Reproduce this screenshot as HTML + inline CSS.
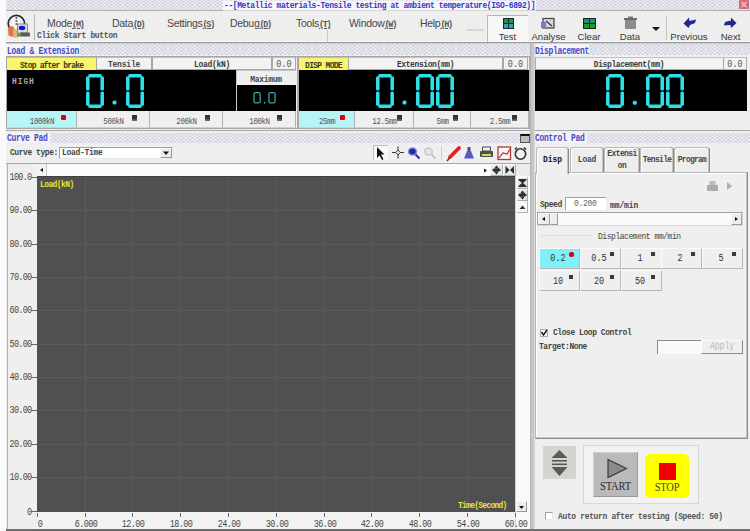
<!DOCTYPE html><html><head><meta charset="utf-8"><style>
*{margin:0;padding:0;box-sizing:border-box}
html,body{width:750px;height:531px;overflow:hidden;background:#efefef;position:relative}
div{position:absolute}
svg{position:absolute;left:0;top:0}
.t{white-space:nowrap;font-family:"Liberation Mono",monospace;font-size:8px;line-height:10px;color:#444;transform:scaleY(1.2);transform-origin:50% 55%}
.b{font-weight:bold}
.sa{font-family:"Liberation Sans",sans-serif;transform:none}
.ns{transform:none}
.hd{color:#4a4ac4;font-weight:bold;font-size:8px;line-height:10px;letter-spacing:-0.3px;padding-top:1px;height:11px;transform:scaleY(1.25)}
.pb{background:#f2f2f2;border:1px solid #a8a8a8;border-top-color:#c0c0c0}
.btn{background:#ececec;border-left:1px solid #fafafa;border-top:1px solid #fafafa;border-right:1px solid #9a9a9a;border-bottom:1px solid #9a9a9a}
</style></head><body>
<div style="left:0px;top:0px;width:6px;height:531px;background:#fafafa"></div>
<div style="left:6px;top:0px;width:744px;height:10px;background-color:#f6f6fa;background-image:radial-gradient(circle at center,#cacad8 0.8px,transparent 1.4px),radial-gradient(circle at center,#cacad8 0.8px,transparent 1.4px);background-size:4.5px 3.4px;background-position:0 0,2.25px 1.7px;"></div>
<div style="left:6px;top:10px;width:744px;height:1px;background:#b0b0b0"></div>
<div class="t b" style="left:223px;top:1px;color:#3535cc;font-size:8px;line-height:9px;letter-spacing:-0.42px;background:#f6f6fb;padding:0 1px;height:9px;transform:scaleY(1.1);transform-origin:50% 40%">--[Metallic materials-Tensile testing at ambient temperature(ISO-6892)]</div>
<div style="left:739px;top:0px;width:10px;height:9px;background:#d96a7a;border-radius:1px"></div>
<svg width="750" height="12"><path d="M741.5 2 L746.5 7 M746.5 2 L741.5 7" stroke="#f6c8cc" stroke-width="1.3"/></svg>
<div style="left:6px;top:11px;width:744px;height:31px;background:#eeeeee"></div>
<div style="left:6px;top:41px;width:744px;height:1px;background:#f8f8f8"></div>
<div style="left:6px;top:42px;width:744px;height:1px;background:#9a9a9a"></div>
<div style="left:6px;top:43px;width:744px;height:1px;background:#d0d0d0"></div>
<svg width="750" height="60">
<circle cx="16.4" cy="23.6" r="8.2" fill="#f2f2f2" stroke="#2a2a2a" stroke-width="1.7"/>
<rect x="15.6" y="17" width="1.6" height="2" fill="#666"/><rect x="15.6" y="20" width="1.6" height="2" fill="#666"/><rect x="15.6" y="23" width="1.6" height="2" fill="#666"/>
<path d="M8 27.5 Q11 25.5 14 27 L14.5 36 Q11 37.5 8.5 35.5 Z" fill="#e2703c"/>
<path d="M12.5 29.5 L16.5 29 L18 37.5 L13.5 37.5 Z" fill="#dcb47c"/>
<rect x="17.5" y="24" width="10" height="9" fill="#dcdcdc" stroke="#8a8a8a" stroke-width="1"/>
<ellipse cx="22" cy="28" rx="3.3" ry="2.2" fill="#1414d8"/>
<rect x="20" y="32.5" width="10" height="4" fill="#5a5a5a" rx="1"/>
<rect x="17" y="33.5" width="4" height="3" fill="#4aa04a"/>
</svg>
<div style="left:34px;top:14px;width:1px;height:26px;background:#b4b4b4"></div>
<div class="t sa" style="left:47px;top:18px;font-size:10.5px;line-height:11px;color:#484848;letter-spacing:-0.3px">Mode<span style="font-family:Liberation Mono;font-size:8.5px;text-decoration:underline;letter-spacing:-1.3px;font-weight:bold;color:#555">(M)</span></div>
<div class="t sa" style="left:112px;top:18px;font-size:10.5px;line-height:11px;color:#484848;letter-spacing:-0.3px">Data<span style="font-family:Liberation Mono;font-size:8.5px;text-decoration:underline;letter-spacing:-1.3px;font-weight:bold;color:#555">(D)</span></div>
<div class="t sa" style="left:167px;top:18px;font-size:10.5px;line-height:11px;color:#484848;letter-spacing:-0.3px">Settings<span style="font-family:Liberation Mono;font-size:8.5px;text-decoration:underline;letter-spacing:-1.3px;font-weight:bold;color:#555">(S)</span></div>
<div class="t sa" style="left:230px;top:18px;font-size:10.5px;line-height:11px;color:#484848;letter-spacing:-0.3px">Debug<span style="font-family:Liberation Mono;font-size:8.5px;text-decoration:underline;letter-spacing:-1.3px;font-weight:bold;color:#555">(D)</span></div>
<div class="t sa" style="left:296px;top:18px;font-size:10.5px;line-height:11px;color:#484848;letter-spacing:-0.3px">Tools<span style="font-family:Liberation Mono;font-size:8.5px;text-decoration:underline;letter-spacing:-1.3px;font-weight:bold;color:#555">(T)</span></div>
<div class="t sa" style="left:349px;top:18px;font-size:10.5px;line-height:11px;color:#484848;letter-spacing:-0.3px">Window<span style="font-family:Liberation Mono;font-size:8.5px;text-decoration:underline;letter-spacing:-1.3px;font-weight:bold;color:#555">(W)</span></div>
<div class="t sa" style="left:420px;top:18px;font-size:10.5px;line-height:11px;color:#484848;letter-spacing:-0.3px">Help<span style="font-family:Liberation Mono;font-size:8.5px;text-decoration:underline;letter-spacing:-1.3px;font-weight:bold;color:#555">(H)</span></div>
<div class="t b" style="left:37px;top:31px;font-size:8px;letter-spacing:-0.35px;color:#555">Click Start button</div>
<div style="left:327px;top:30px;width:1px;height:12px;background:#c8c8c8"></div>
<div style="left:467px;top:29px;width:17px;height:2px;background:#d6d6d6"></div>
<div style="left:487px;top:15px;width:41px;height:27px;background:#f7f7f7;border-left:1px solid #b8b8b8;border-top:1px solid #b8b8b8"></div>
<svg width="750" height="45">
<rect x="503" y="18" width="11" height="11" fill="#102840"/>
<rect x="504" y="19" width="4" height="4" fill="#1a9a3a"/><rect x="509" y="19" width="4" height="4" fill="#1a9a3a"/>
<rect x="504" y="24" width="4" height="4" fill="#3aa0a8"/><rect x="509" y="24" width="4" height="4" fill="#3aa0a8"/>
<rect x="543" y="18.5" width="11" height="9.5" fill="#d6d6d6" stroke="#4a4a4a" stroke-width="1.3"/>
<rect x="541" y="22" width="5" height="6" fill="#7878d0"/>
<path d="M546 21 L552 26" stroke="#333" stroke-width="1.2"/>
<rect x="583" y="18" width="13" height="11" fill="#0b2a1a"/>
<rect x="584" y="19" width="5" height="4" fill="#2a8a7a"/><rect x="590" y="19" width="5" height="4" fill="#2a8a7a"/>
<rect x="584" y="24" width="5" height="4" fill="#1aa02a"/><rect x="590" y="24" width="5" height="4" fill="#1aa02a"/>
<rect x="625" y="19.5" width="11" height="9.5" fill="#8c8c8c" rx="1"/>
<rect x="624" y="18" width="13" height="2" fill="#6a6a6a"/>
<rect x="628" y="16.5" width="5" height="2" fill="#777"/>
<path d="M652 27 L660 27 L656 31 Z" fill="#111"/>
<path d="M683.5 23.5 L689 17.5 L689.5 21 L696 19.5 L695 23 L690 25 L688.5 28 Z" fill="#26268c"/>
<path d="M736.5 23 L731 17.5 L731 20.5 L725 22 L724 25.5 L730.5 25 L731 28 Z" fill="#26268c"/>
</svg>
<div style="left:666px;top:16px;width:1px;height:24px;background:#c4c4c4"></div>
<div class="t sa" style="left:487px;top:31px;width:41px;text-align:center;font-size:9.6px;line-height:11px;color:#383838">Test</div>
<div class="t sa" style="left:528px;top:31px;width:41px;text-align:center;font-size:9.6px;line-height:11px;color:#383838">Analyse</div>
<div class="t sa" style="left:574px;top:31px;width:30px;text-align:center;font-size:9.6px;line-height:11px;color:#383838">Clear</div>
<div class="t sa" style="left:616px;top:31px;width:28px;text-align:center;font-size:9.6px;line-height:11px;color:#383838">Data</div>
<div class="t sa" style="left:668px;top:31px;width:42px;text-align:center;font-size:9.6px;line-height:11px;color:#383838">Previous</div>
<div class="t sa" style="left:716px;top:31px;width:29px;text-align:center;font-size:9.6px;line-height:11px;color:#383838">Next</div>
<div style="left:6px;top:44px;width:524px;height:11px;background-color:#f6f6fa;background-image:radial-gradient(circle at center,#cacad8 0.8px,transparent 1.4px),radial-gradient(circle at center,#cacad8 0.8px,transparent 1.4px);background-size:4.5px 3.4px;background-position:0 0,2.25px 1.7px;"></div>
<div style="left:6px;top:44px;width:74px;height:11px;background:#f3f3f8"></div>
<div class="t hd" style="left:7px;top:46px;">Load &amp; Extension</div>
<div style="left:535px;top:44px;width:215px;height:11px;background-color:#f6f6fa;background-image:radial-gradient(circle at center,#cacad8 0.8px,transparent 1.4px),radial-gradient(circle at center,#cacad8 0.8px,transparent 1.4px);background-size:4.5px 3.4px;background-position:0 0,2.25px 1.7px;"></div>
<div style="left:535px;top:44px;width:54px;height:11px;background:#f3f3f8"></div>
<div class="t hd" style="left:535px;top:46px;">Displacement</div>
<div style="left:530px;top:43px;width:5px;height:486px;background:#c6c6c6;border-left:1px solid #b4b4b4;border-right:1px solid #dadada"></div>
<div style="left:6px;top:56px;width:292px;height:73px;background:#efefef;border:1px solid #a8a8a8"></div>
<div style="left:7px;top:57px;width:89px;height:13px;background:#f9f56e;border-top:1px solid #c8c470"></div>
<div class="t b" style="left:7px;top:61px;width:89px;text-align:center;letter-spacing:-0.85px;color:#3a3a20">Stop after brake</div>
<div class="pb" style="left:96px;top:57px;width:56px;height:13px;"></div>
<div class="pb" style="left:152px;top:57px;width:120px;height:13px;"></div>
<div class="pb" style="left:272px;top:57px;width:24px;height:13px;"></div>
<div class="t b" style="left:96px;top:60px;width:56px;text-align:center;color:#484848;letter-spacing:-0.2px">Tensile</div>
<div class="t b" style="left:152px;top:60px;width:120px;text-align:center;letter-spacing:-0.3px;color:#3a3a3a">Load(kN)</div>
<div class="t " style="left:272px;top:60px;width:24px;text-align:center;font-size:8.5px;color:#555">0.0</div>
<div style="left:7px;top:70px;width:229px;height:41px;background:#000"></div>
<div style="left:236px;top:70px;width:60px;height:15px;background:#efefef;border-top:1px solid #c4c4c4;border-left:1px solid #c4c4c4"></div>
<div class="t b" style="left:236px;top:75px;width:60px;text-align:center;color:#454545;letter-spacing:-0.3px">Maximum</div>
<div style="left:236px;top:85px;width:60px;height:26px;background:#000;border-left:1px solid #c8c8c8"></div>
<div class="t b" style="left:12px;top:77px;color:#a8a8a8;letter-spacing:0.9px">HIGH</div>
<div style="left:7px;top:111px;width:70px;height:17px;background:#b8f4f6;border-right:1px solid #b0b0b0;border-bottom:1px solid #d0d0d0"></div>
<div class="t " style="left:7px;top:117px;width:70px;text-align:center;font-size:7.5px;color:#555;letter-spacing:-0.45px">1000kN</div>
<div style="left:77px;top:111px;width:73px;height:17px;background:#efefef;border-right:1px solid #b0b0b0;border-bottom:1px solid #d0d0d0"></div>
<div class="t " style="left:77px;top:117px;width:73px;text-align:center;font-size:7.5px;color:#555;letter-spacing:-0.45px">500kN</div>
<div style="left:150px;top:111px;width:73px;height:17px;background:#efefef;border-right:1px solid #b0b0b0;border-bottom:1px solid #d0d0d0"></div>
<div class="t " style="left:150px;top:117px;width:73px;text-align:center;font-size:7.5px;color:#555;letter-spacing:-0.45px">200kN</div>
<div style="left:223px;top:111px;width:73px;height:17px;background:#efefef;border-right:1px solid #b0b0b0;border-bottom:1px solid #d0d0d0"></div>
<div class="t " style="left:223px;top:117px;width:73px;text-align:center;font-size:7.5px;color:#555;letter-spacing:-0.45px">100kN</div>
<div style="left:298px;top:56px;width:232px;height:73px;background:#efefef;border:1px solid #a8a8a8"></div>
<div style="left:299px;top:57px;width:49px;height:13px;background:#f9f56e;border-top:1px solid #c8c470"></div>
<div class="t b" style="left:299px;top:61px;width:49px;text-align:center;letter-spacing:-0.7px;color:#3a3a20">DISP MODE</div>
<div class="pb" style="left:348px;top:57px;width:155px;height:13px;"></div>
<div class="pb" style="left:503px;top:57px;width:25px;height:13px;"></div>
<div class="t b" style="left:348px;top:60px;width:155px;text-align:center;letter-spacing:-0.4px;color:#3a3a3a">Extension(mm)</div>
<div class="t " style="left:503px;top:60px;width:25px;text-align:center;font-size:8.5px;color:#555">0.0</div>
<div style="left:299px;top:70px;width:230px;height:41px;background:#000"></div>
<div style="left:299px;top:111px;width:56px;height:17px;background:#b8f4f6;border-right:1px solid #b0b0b0;border-bottom:1px solid #d0d0d0"></div>
<div class="t " style="left:299px;top:117px;width:56px;text-align:center;font-size:7.5px;color:#555;letter-spacing:-0.45px">25mm</div>
<div style="left:355px;top:111px;width:59px;height:17px;background:#efefef;border-right:1px solid #b0b0b0;border-bottom:1px solid #d0d0d0"></div>
<div class="t " style="left:355px;top:117px;width:59px;text-align:center;font-size:7.5px;color:#555;letter-spacing:-0.45px">12.5mm</div>
<div style="left:414px;top:111px;width:57px;height:17px;background:#efefef;border-right:1px solid #b0b0b0;border-bottom:1px solid #d0d0d0"></div>
<div class="t " style="left:414px;top:117px;width:57px;text-align:center;font-size:7.5px;color:#555;letter-spacing:-0.45px">5mm</div>
<div style="left:471px;top:111px;width:58px;height:17px;background:#efefef;border-right:1px solid #b0b0b0;border-bottom:1px solid #d0d0d0"></div>
<div class="t " style="left:471px;top:117px;width:58px;text-align:center;font-size:7.5px;color:#555;letter-spacing:-0.45px">2.5mm</div>
<div class="pb" style="left:535px;top:57px;width:212px;height:13px;"></div>
<div class="pb" style="left:723px;top:57px;width:24px;height:13px;"></div>
<div class="t b" style="left:535px;top:60px;width:188px;text-align:center;letter-spacing:-0.4px;color:#3a3a3a">Displacement(mm)</div>
<div class="t " style="left:723px;top:60px;width:24px;text-align:center;font-size:8.5px;color:#555">0.0</div>
<div style="left:535px;top:70px;width:212px;height:41px;background:#000"></div>
<div style="left:61px;top:115px;width:5px;height:5px;background:#e00000;border-radius:1px"></div>
<div style="left:132px;top:115px;width:5px;height:6px;background:linear-gradient(to bottom,#2e2e2e 0,#3a3a3a 60%,#7a7a7a 100%)"></div>
<div style="left:205px;top:115px;width:5px;height:6px;background:linear-gradient(to bottom,#2e2e2e 0,#3a3a3a 60%,#7a7a7a 100%)"></div>
<div style="left:277px;top:115px;width:5px;height:6px;background:linear-gradient(to bottom,#2e2e2e 0,#3a3a3a 60%,#7a7a7a 100%)"></div>
<div style="left:340px;top:115px;width:5px;height:5px;background:#e00000;border-radius:1px"></div>
<div style="left:397px;top:115px;width:5px;height:6px;background:linear-gradient(to bottom,#2e2e2e 0,#3a3a3a 60%,#7a7a7a 100%)"></div>
<div style="left:453px;top:115px;width:5px;height:6px;background:linear-gradient(to bottom,#2e2e2e 0,#3a3a3a 60%,#7a7a7a 100%)"></div>
<div style="left:512px;top:115px;width:5px;height:6px;background:linear-gradient(to bottom,#2e2e2e 0,#3a3a3a 60%,#7a7a7a 100%)"></div>
<svg width="750" height="531"><g fill="#2fdfe8"><rect x="88.2" y="74" width="13.6" height="3.6" rx="1.6"/><rect x="88.2" y="104.4" width="13.6" height="3.6" rx="1.6"/><rect x="86" y="76.2" width="3.6" height="14.399999999999999" rx="1.6"/><rect x="86" y="91.4" width="3.6" height="14.399999999999999" rx="1.6"/><rect x="100.4" y="76.2" width="3.6" height="14.399999999999999" rx="1.6"/><rect x="100.4" y="91.4" width="3.6" height="14.399999999999999" rx="1.6"/><rect x="128.2" y="74" width="13.6" height="3.6" rx="1.6"/><rect x="128.2" y="104.4" width="13.6" height="3.6" rx="1.6"/><rect x="126" y="76.2" width="3.6" height="14.399999999999999" rx="1.6"/><rect x="126" y="91.4" width="3.6" height="14.399999999999999" rx="1.6"/><rect x="140.4" y="76.2" width="3.6" height="14.399999999999999" rx="1.6"/><rect x="140.4" y="91.4" width="3.6" height="14.399999999999999" rx="1.6"/><rect x="112.5" y="100.5" width="4" height="4" rx="1.5"/><rect x="378.2" y="74" width="13.6" height="3.6" rx="1.6"/><rect x="378.2" y="104.4" width="13.6" height="3.6" rx="1.6"/><rect x="376" y="76.2" width="3.6" height="14.399999999999999" rx="1.6"/><rect x="376" y="91.4" width="3.6" height="14.399999999999999" rx="1.6"/><rect x="390.4" y="76.2" width="3.6" height="14.399999999999999" rx="1.6"/><rect x="390.4" y="91.4" width="3.6" height="14.399999999999999" rx="1.6"/><rect x="418.2" y="74" width="13.6" height="3.6" rx="1.6"/><rect x="418.2" y="104.4" width="13.6" height="3.6" rx="1.6"/><rect x="416" y="76.2" width="3.6" height="14.399999999999999" rx="1.6"/><rect x="416" y="91.4" width="3.6" height="14.399999999999999" rx="1.6"/><rect x="430.4" y="76.2" width="3.6" height="14.399999999999999" rx="1.6"/><rect x="430.4" y="91.4" width="3.6" height="14.399999999999999" rx="1.6"/><rect x="438.2" y="74" width="13.6" height="3.6" rx="1.6"/><rect x="438.2" y="104.4" width="13.6" height="3.6" rx="1.6"/><rect x="436" y="76.2" width="3.6" height="14.399999999999999" rx="1.6"/><rect x="436" y="91.4" width="3.6" height="14.399999999999999" rx="1.6"/><rect x="450.4" y="76.2" width="3.6" height="14.399999999999999" rx="1.6"/><rect x="450.4" y="91.4" width="3.6" height="14.399999999999999" rx="1.6"/><rect x="402.5" y="100.5" width="4" height="4" rx="1.5"/><rect x="608.1999999999999" y="74" width="13.6" height="3.6" rx="1.6"/><rect x="608.1999999999999" y="104.4" width="13.6" height="3.6" rx="1.6"/><rect x="606" y="76.2" width="3.6" height="14.399999999999999" rx="1.6"/><rect x="606" y="91.4" width="3.6" height="14.399999999999999" rx="1.6"/><rect x="620.4" y="76.2" width="3.6" height="14.399999999999999" rx="1.6"/><rect x="620.4" y="91.4" width="3.6" height="14.399999999999999" rx="1.6"/><rect x="648.1999999999999" y="74" width="13.6" height="3.6" rx="1.6"/><rect x="648.1999999999999" y="104.4" width="13.6" height="3.6" rx="1.6"/><rect x="646" y="76.2" width="3.6" height="14.399999999999999" rx="1.6"/><rect x="646" y="91.4" width="3.6" height="14.399999999999999" rx="1.6"/><rect x="660.4" y="76.2" width="3.6" height="14.399999999999999" rx="1.6"/><rect x="660.4" y="91.4" width="3.6" height="14.399999999999999" rx="1.6"/><rect x="668.1999999999999" y="74" width="13.6" height="3.6" rx="1.6"/><rect x="668.1999999999999" y="104.4" width="13.6" height="3.6" rx="1.6"/><rect x="666" y="76.2" width="3.6" height="14.399999999999999" rx="1.6"/><rect x="666" y="91.4" width="3.6" height="14.399999999999999" rx="1.6"/><rect x="680.4" y="76.2" width="3.6" height="14.399999999999999" rx="1.6"/><rect x="680.4" y="91.4" width="3.6" height="14.399999999999999" rx="1.6"/><rect x="632.8" y="100.8" width="4" height="4" rx="1.5"/></g><g fill="none" stroke="#38a8a0" stroke-width="1.3"><rect x="254" y="92.6" width="6.2" height="10.2" rx="1.4"/><rect x="268.9" y="92.6" width="6.2" height="10.2" rx="1.4"/></g><rect x="264" y="102" width="1.6" height="1.6" fill="#2aa8a8"/></svg>
<div style="left:6px;top:130px;width:524px;height:1px;background:#a8a8a8"></div>
<div style="left:6px;top:133px;width:524px;height:10px;background-color:#f6f6fa;background-image:radial-gradient(circle at center,#cacad8 0.8px,transparent 1.4px),radial-gradient(circle at center,#cacad8 0.8px,transparent 1.4px);background-size:4.5px 3.4px;background-position:0 0,2.25px 1.7px;"></div>
<div style="left:6px;top:133px;width:44px;height:10px;background:#f3f3f8"></div>
<div class="t hd" style="left:7px;top:133px;">Curve Pad</div>
<div style="left:520px;top:134px;width:10px;height:9px;background:#bdbdbd;border:1px solid #555;border-top:2px solid #111"></div>
<div class="t b" style="left:10px;top:148px;color:#454545;letter-spacing:-0.45px">Curve type:</div>
<div style="left:59px;top:147px;width:114px;height:12px;background:#fff;border:1px solid #a0a0a0;border-right-color:#e8e8e8;border-bottom-color:#e8e8e8"></div>
<div class="t b" style="left:62px;top:148px;color:#454545;letter-spacing:-0.3px">Load-Time</div>
<div class="btn" style="left:160px;top:148px;width:12px;height:10px;"></div>
<svg width="750" height="531"><path d="M163 151.5 L169 151.5 L166 155 Z" fill="#111"/>
<rect x="373" y="145" width="15" height="15" fill="#f8f8f8"/><path d="M373.5 160 V145.5 H388" stroke="#bcbcbc" fill="none"/>
<path d="M377 147 L377 158 L379.5 155.5 L382 160 L383.5 159.2 L381 154.5 L384.5 154.5 Z" fill="#111"/>
<path d="M398 146.5 V158.5 M392 152.5 H404" stroke="#3a3a3a" stroke-width="1.1"/>
<path d="M398 150 L400.5 152.5 L398 155 L395.5 152.5 Z" fill="#ddd" stroke="#333" stroke-width="0.9"/>
<ellipse cx="412.5" cy="151.5" rx="4" ry="3.6" fill="#2828a8" stroke="#8c8cd8" stroke-width="1.4"/>
<path d="M415.5 154.5 L419.5 158.5" stroke="#2a2a98" stroke-width="2"/>
<ellipse cx="428.5" cy="151.5" rx="3.8" ry="3.5" fill="#e4e4e4" stroke="#c4c4c4" stroke-width="1.3"/>
<path d="M431.5 154.5 L435.5 158.5" stroke="#c4c4c4" stroke-width="1.8"/>
<path d="M441.5 146 V160" stroke="#cfcfcf"/>
<path d="M450 157 L459 148" stroke="#e42020" stroke-width="3.8" stroke-linecap="round"/>
<path d="M447 161 L449.5 158" stroke="#444" stroke-width="1.6"/>
<rect x="467.5" y="147" width="3" height="4.5" fill="#505070"/><path d="M467 151 L471 151 L474 158.5 L464 158.5 Z" fill="#5a5ac0"/>
<rect x="480" y="151" width="13" height="6" fill="#505050" rx="1"/>
<rect x="482.5" y="147" width="8" height="4" fill="#eee" stroke="#505050"/>
<rect x="482" y="154" width="9" height="2" fill="#d8d850"/>
<rect x="498" y="147" width="12.5" height="12.5" fill="#f8f8f8" stroke="#b03838" stroke-width="1.3"/>
<path d="M499 158 L503 153 L507 154 L510 149" stroke="#d82020" fill="none" stroke-width="1.2"/>
<circle cx="520.5" cy="154" r="5.2" fill="#f4f4f4" stroke="#333" stroke-width="1.6"/>
<path d="M515 149.5 L517 147.5 M526 149.5 L524 147.5" stroke="#333" stroke-width="1.6"/>
</svg>
<div style="left:6px;top:163px;width:524px;height:1px;background:#a8a8a8"></div>
<div style="left:7px;top:164px;width:523px;height:365px;background:#efefef;border-left:1px solid #b0b0b0"></div>
<div style="left:47px;top:164px;width:437px;height:13px;background:#fbfbfb"></div>
<div style="left:37px;top:164px;width:10px;height:13px;background:#f2f2f2;border-right:1px solid #c8c8c8"></div>
<div style="left:482px;top:164px;width:8px;height:12px;background:#fbfbfb"></div>
<div style="left:490px;top:164px;width:13px;height:12px;background:#e8e8e8;border-left:1px solid #fafafa;border-top:1px solid #fafafa;border-right:1px solid #b0b0b0;border-bottom:1px solid #b0b0b0"></div>
<div style="left:503px;top:164px;width:13px;height:12px;background:#e8e8e8;border-left:1px solid #fafafa;border-top:1px solid #fafafa;border-right:1px solid #b0b0b0;border-bottom:1px solid #b0b0b0"></div>
<div style="left:516px;top:164px;width:14px;height:13px;background:#ececec"></div>
<div style="left:37px;top:176px;width:478px;height:336px;background:#505050;border-top:1px solid #404040"></div>
<svg width="750" height="531"><g fill="#5b5b5b"><rect x="85" y="177" width="1" height="335"/><rect x="132" y="177" width="1" height="335"/><rect x="180" y="177" width="1" height="335"/><rect x="228" y="177" width="1" height="335"/><rect x="276" y="177" width="1" height="335"/><rect x="324" y="177" width="1" height="335"/><rect x="371" y="177" width="1" height="335"/><rect x="419" y="177" width="1" height="335"/><rect x="467" y="177" width="1" height="335"/><rect x="37" y="210" width="478" height="1"/><rect x="37" y="244" width="478" height="1"/><rect x="37" y="277" width="478" height="1"/><rect x="37" y="310" width="478" height="1"/><rect x="37" y="344" width="478" height="1"/><rect x="37" y="377" width="478" height="1"/><rect x="37" y="410" width="478" height="1"/><rect x="37" y="444" width="478" height="1"/><rect x="37" y="477" width="478" height="1"/></g></svg>
<div class="t b" style="left:40px;top:180px;color:#e4e43a;letter-spacing:-0.6px">Load(kN)</div>
<div class="t b" style="left:458px;top:501px;color:#e4e43a;letter-spacing:-0.75px">Time(Second)</div>
<div style="left:37px;top:512px;width:478px;height:17px;background:#f3f3f3"></div>
<div style="left:515px;top:176px;width:15px;height:353px;background:#fafafa;border-left:1px solid #d0d0d0"></div>
<div style="left:517px;top:177px;width:11px;height:12px;background:#e6e6e6;border-left:1px solid #fafafa;border-top:1px solid #fafafa;border-right:1px solid #a8a8a8;border-bottom:1px solid #a8a8a8"></div>
<div style="left:517px;top:189px;width:11px;height:12px;background:#e6e6e6;border-left:1px solid #fafafa;border-top:1px solid #fafafa;border-right:1px solid #a8a8a8;border-bottom:1px solid #a8a8a8"></div>
<div style="left:517px;top:201px;width:11px;height:12px;background:#f6f6f6;border-right:1px solid #b4b4b4;border-bottom:1px solid #b4b4b4"></div>
<div class="btn" style="left:516px;top:501px;width:11px;height:11px;"></div>
<svg width="750" height="531">
<path d="M519 506 L524 506 L521.5 509 Z" fill="#111"/>
<path d="M519.5 209 L525.5 209 L522.5 205.5 Z" fill="#333"/>
<path d="M518.5 179 H526.5 V180 L523 183 L526.5 186 V187 H518.5 V186 L522 183 L518.5 180 Z" fill="#2e2e2e"/>
<path d="M520.0 193.5 L522.5 190.5 L525.0 193.5 Z M520.0 196.5 L522.5 199.5 L525.0 196.5 Z M521.0 192.5 L518.0 195 L521.0 197.5 Z M524.0 192.5 L527.0 195 L524.0 197.5 Z" fill="#2e2e2e"/><rect x="520.9" y="193.4" width="3.2" height="3.2" fill="#2e2e2e"/>
<path d="M494.0 168.5 L496.5 165.5 L499.0 168.5 Z M494.0 171.5 L496.5 174.5 L499.0 171.5 Z M495.0 167.5 L492.0 170 L495.0 172.5 Z M498.0 167.5 L501.0 170 L498.0 172.5 Z" fill="#2e2e2e"/><rect x="494.9" y="168.4" width="3.2" height="3.2" fill="#2e2e2e"/>
<path d="M484 168.5 L484 172.5 L487 170.5 Z" fill="#111"/>
<path d="M43 168 L43 172 L40 170 Z" fill="#111"/>
<path d="M505.5 166 V174 L509.5 170 Z M514 166 V174 L510 170 Z" fill="#2e2e2e"/>
</svg>
<div class="t " style="left:0px;top:173px;width:31.5px;text-align:right;font-size:8.5px;color:#484848;letter-spacing:-0.7px">100.0</div>
<div style="left:31px;top:177px;width:6px;height:1px;background:#666"></div>
<div class="t " style="left:0px;top:206px;width:31.5px;text-align:right;font-size:8.5px;color:#484848;letter-spacing:-0.7px">90.00</div>
<div style="left:31px;top:210px;width:6px;height:1px;background:#666"></div>
<div class="t " style="left:0px;top:240px;width:31.5px;text-align:right;font-size:8.5px;color:#484848;letter-spacing:-0.7px">80.00</div>
<div style="left:31px;top:244px;width:6px;height:1px;background:#666"></div>
<div class="t " style="left:0px;top:273px;width:31.5px;text-align:right;font-size:8.5px;color:#484848;letter-spacing:-0.7px">70.00</div>
<div style="left:31px;top:277px;width:6px;height:1px;background:#666"></div>
<div class="t " style="left:0px;top:306px;width:31.5px;text-align:right;font-size:8.5px;color:#484848;letter-spacing:-0.7px">60.00</div>
<div style="left:31px;top:310px;width:6px;height:1px;background:#666"></div>
<div class="t " style="left:0px;top:340px;width:31.5px;text-align:right;font-size:8.5px;color:#484848;letter-spacing:-0.7px">50.00</div>
<div style="left:31px;top:344px;width:6px;height:1px;background:#666"></div>
<div class="t " style="left:0px;top:373px;width:31.5px;text-align:right;font-size:8.5px;color:#484848;letter-spacing:-0.7px">40.00</div>
<div style="left:31px;top:377px;width:6px;height:1px;background:#666"></div>
<div class="t " style="left:0px;top:406px;width:31.5px;text-align:right;font-size:8.5px;color:#484848;letter-spacing:-0.7px">30.00</div>
<div style="left:31px;top:410px;width:6px;height:1px;background:#666"></div>
<div class="t " style="left:0px;top:440px;width:31.5px;text-align:right;font-size:8.5px;color:#484848;letter-spacing:-0.7px">20.00</div>
<div style="left:31px;top:444px;width:6px;height:1px;background:#666"></div>
<div class="t " style="left:0px;top:473px;width:31.5px;text-align:right;font-size:8.5px;color:#484848;letter-spacing:-0.7px">10.00</div>
<div style="left:31px;top:477px;width:6px;height:1px;background:#666"></div>
<div class="t " style="left:0px;top:508px;width:31.5px;text-align:right;font-size:8.5px;color:#484848;letter-spacing:-0.7px">0</div>
<div style="left:31px;top:511px;width:6px;height:1px;background:#666"></div>
<div style="left:37px;top:513px;width:1px;height:4px;background:#666"></div>
<div class="t " style="left:20px;top:520px;width:40px;text-align:center;font-size:8.5px;color:#484848;letter-spacing:-0.6px">0</div>
<div style="left:85px;top:513px;width:1px;height:4px;background:#666"></div>
<div class="t " style="left:66px;top:520px;width:40px;text-align:center;font-size:8.5px;color:#484848;letter-spacing:-0.6px">6.000</div>
<div style="left:132px;top:513px;width:1px;height:4px;background:#666"></div>
<div class="t " style="left:113px;top:520px;width:40px;text-align:center;font-size:8.5px;color:#484848;letter-spacing:-0.6px">12.00</div>
<div style="left:180px;top:513px;width:1px;height:4px;background:#666"></div>
<div class="t " style="left:161px;top:520px;width:40px;text-align:center;font-size:8.5px;color:#484848;letter-spacing:-0.6px">18.00</div>
<div style="left:228px;top:513px;width:1px;height:4px;background:#666"></div>
<div class="t " style="left:209px;top:520px;width:40px;text-align:center;font-size:8.5px;color:#484848;letter-spacing:-0.6px">24.00</div>
<div style="left:276px;top:513px;width:1px;height:4px;background:#666"></div>
<div class="t " style="left:257px;top:520px;width:40px;text-align:center;font-size:8.5px;color:#484848;letter-spacing:-0.6px">30.00</div>
<div style="left:324px;top:513px;width:1px;height:4px;background:#666"></div>
<div class="t " style="left:305px;top:520px;width:40px;text-align:center;font-size:8.5px;color:#484848;letter-spacing:-0.6px">36.00</div>
<div style="left:371px;top:513px;width:1px;height:4px;background:#666"></div>
<div class="t " style="left:352px;top:520px;width:40px;text-align:center;font-size:8.5px;color:#484848;letter-spacing:-0.6px">42.00</div>
<div style="left:419px;top:513px;width:1px;height:4px;background:#666"></div>
<div class="t " style="left:400px;top:520px;width:40px;text-align:center;font-size:8.5px;color:#484848;letter-spacing:-0.6px">48.00</div>
<div style="left:467px;top:513px;width:1px;height:4px;background:#666"></div>
<div class="t " style="left:448px;top:520px;width:40px;text-align:center;font-size:8.5px;color:#484848;letter-spacing:-0.6px">54.00</div>
<div style="left:515px;top:513px;width:1px;height:4px;background:#666"></div>
<div class="t " style="left:496px;top:520px;width:40px;text-align:center;font-size:8.5px;color:#484848;letter-spacing:-0.6px">60.00</div>
<div style="left:6px;top:529px;width:744px;height:2px;background:#6e6e6e"></div>
<div style="left:535px;top:130px;width:215px;height:1px;background:#a8a8a8"></div>
<div style="left:535px;top:133px;width:215px;height:10px;background-color:#f6f6fa;background-image:radial-gradient(circle at center,#cacad8 0.8px,transparent 1.4px),radial-gradient(circle at center,#cacad8 0.8px,transparent 1.4px);background-size:4.5px 3.4px;background-position:0 0,2.25px 1.7px;"></div>
<div style="left:535px;top:133px;width:52px;height:10px;background:#f3f3f8"></div>
<div class="t hd" style="left:535px;top:133px;">Control Pad</div>
<div style="left:535px;top:172px;width:213px;height:267px;background:#efefef;border-left:1px solid #b8b8b8;border-top:1px solid #b8b8b8;border-right:1px solid #8c8c8c;border-bottom:1px solid #8c8c8c;box-shadow:inset -1px -1px #c4c4c4,inset 1px 1px #fff"></div>
<div style="left:536px;top:147px;width:33px;height:27px;background:#efefef;border-left:1px solid #b8b8b8;border-top:1px solid #b8b8b8;border-right:1px solid #8c8c8c;box-shadow:inset -1px 0 #c4c4c4,inset 1px 1px #fff;border-radius:3px 3px 0 0"></div>
<div style="left:570px;top:147px;width:34px;height:25px;background:#ededed;border-left:1px solid #b8b8b8;border-top:1px solid #b8b8b8;border-right:1px solid #8c8c8c;box-shadow:inset -1px 0 #c4c4c4,inset 1px 1px #fff;border-radius:3px 3px 0 0"></div>
<div style="left:604px;top:147px;width:36px;height:25px;background:#ededed;border-left:1px solid #b8b8b8;border-top:1px solid #b8b8b8;border-right:1px solid #8c8c8c;box-shadow:inset -1px 0 #c4c4c4,inset 1px 1px #fff;border-radius:3px 3px 0 0"></div>
<div style="left:640px;top:147px;width:34px;height:25px;background:#ededed;border-left:1px solid #b8b8b8;border-top:1px solid #b8b8b8;border-right:1px solid #8c8c8c;box-shadow:inset -1px 0 #c4c4c4,inset 1px 1px #fff;border-radius:3px 3px 0 0"></div>
<div style="left:674px;top:147px;width:36px;height:25px;background:#ededed;border-left:1px solid #b8b8b8;border-top:1px solid #b8b8b8;border-right:1px solid #8c8c8c;box-shadow:inset -1px 0 #c4c4c4,inset 1px 1px #fff;border-radius:3px 3px 0 0"></div>
<div class="t b" style="left:536px;top:155px;width:33px;text-align:center;color:#111">Disp</div>
<div class="t b" style="left:570px;top:155px;width:34px;text-align:center;color:#484848;letter-spacing:-0.2px">Load</div>
<div class="t b" style="left:604px;top:150px;width:36px;text-align:center;line-height:10px;color:#484848;letter-spacing:-0.6px">Extensi<br>on</div>
<div class="t b" style="left:640px;top:155px;width:34px;text-align:center;color:#484848;letter-spacing:-0.7px">Tensile</div>
<div class="t b" style="left:674px;top:155px;width:36px;text-align:center;color:#484848;letter-spacing:-0.75px">Program</div>
<svg width="750" height="531">
<rect x="707" y="185" width="11" height="6" fill="#acacac"/><rect x="709.5" y="181" width="6" height="4" fill="#bcbcbc"/>
<path d="M727 182 L732 186 L727 190 Z" fill="#b0b0b0"/>
</svg>
<div class="t b" style="left:540px;top:200px;color:#454545;letter-spacing:-0.45px">Speed</div>
<div style="left:565px;top:197px;width:41px;height:13px;background:#fff;border-left:1px solid #a0a0a0;border-top:1px solid #a0a0a0"></div>
<div class="t " style="left:574px;top:199px;font-size:8px;color:#666;letter-spacing:-0.3px">0.200</div>
<div class="t b" style="left:610px;top:201px;font-size:8px;color:#444;letter-spacing:-0.1px">mm/min</div>
<div style="left:537px;top:212px;width:206px;height:14px;background:#f9f9f9;border:1px solid #a0a0a0;border-right-color:#d8d8d8;border-bottom-color:#d8d8d8"></div>
<div class="btn" style="left:538px;top:213px;width:12px;height:12px;"></div>
<div class="btn" style="left:550px;top:213px;width:8px;height:12px;"></div>
<div class="btn" style="left:731px;top:213px;width:11px;height:12px;"></div>
<svg width="750" height="531"><path d="M545 217 L545 221 L542 219 Z" fill="#111"/><path d="M735 217 L735 221 L738 219 Z" fill="#111"/></svg>
<div style="left:540px;top:235px;width:52px;height:1px;background:#dedede"></div>
<div class="t " style="left:598px;top:232px;color:#454545;letter-spacing:-0.45px">Displacement mm/min</div>
<div style="left:539px;top:248px;width:41px;height:21px;background:#80f0f6;border-right:1px solid #b8b8b8;border-bottom:1px solid #b8b8b8;border-left:1px solid #fafafa;border-top:1px solid #fafafa"></div>
<div class="t " style="left:539px;top:254px;width:38px;text-align:center;font-size:8.5px;color:#333">0.2</div>
<div style="left:580px;top:248px;width:41px;height:21px;background:#efefef;border-right:1px solid #b8b8b8;border-bottom:1px solid #b8b8b8;border-left:1px solid #fafafa;border-top:1px solid #fafafa"></div>
<div class="t " style="left:580px;top:254px;width:38px;text-align:center;font-size:8.5px;color:#333">0.5</div>
<div style="left:621px;top:248px;width:41px;height:21px;background:#efefef;border-right:1px solid #b8b8b8;border-bottom:1px solid #b8b8b8;border-left:1px solid #fafafa;border-top:1px solid #fafafa"></div>
<div class="t " style="left:621px;top:254px;width:38px;text-align:center;font-size:8.5px;color:#333">1</div>
<div style="left:661px;top:248px;width:41px;height:21px;background:#efefef;border-right:1px solid #b8b8b8;border-bottom:1px solid #b8b8b8;border-left:1px solid #fafafa;border-top:1px solid #fafafa"></div>
<div class="t " style="left:661px;top:254px;width:38px;text-align:center;font-size:8.5px;color:#333">2</div>
<div style="left:702px;top:248px;width:41px;height:21px;background:#efefef;border-right:1px solid #b8b8b8;border-bottom:1px solid #b8b8b8;border-left:1px solid #fafafa;border-top:1px solid #fafafa"></div>
<div class="t " style="left:702px;top:254px;width:38px;text-align:center;font-size:8.5px;color:#333">5</div>
<div style="left:539px;top:270px;width:41px;height:21px;background:#efefef;border-right:1px solid #b8b8b8;border-bottom:1px solid #b8b8b8;border-left:1px solid #fafafa;border-top:1px solid #fafafa"></div>
<div class="t " style="left:539px;top:277px;width:38px;text-align:center;font-size:8.5px;color:#333">10</div>
<div style="left:580px;top:270px;width:41px;height:21px;background:#efefef;border-right:1px solid #b8b8b8;border-bottom:1px solid #b8b8b8;border-left:1px solid #fafafa;border-top:1px solid #fafafa"></div>
<div class="t " style="left:580px;top:277px;width:38px;text-align:center;font-size:8.5px;color:#333">20</div>
<div style="left:621px;top:270px;width:41px;height:21px;background:#efefef;border-right:1px solid #b8b8b8;border-bottom:1px solid #b8b8b8;border-left:1px solid #fafafa;border-top:1px solid #fafafa"></div>
<div class="t " style="left:621px;top:277px;width:38px;text-align:center;font-size:8.5px;color:#333">50</div>
<div style="left:569px;top:252px;width:5px;height:5px;background:#e00000;border-radius:2px"></div>
<div style="left:610px;top:252px;width:4px;height:4px;background:#3a3a3a"></div>
<div style="left:651px;top:252px;width:4px;height:4px;background:#3a3a3a"></div>
<div style="left:691px;top:252px;width:4px;height:4px;background:#3a3a3a"></div>
<div style="left:732px;top:252px;width:4px;height:4px;background:#3a3a3a"></div>
<div style="left:569px;top:275px;width:4px;height:4px;background:#3a3a3a"></div>
<div style="left:610px;top:275px;width:4px;height:4px;background:#3a3a3a"></div>
<div style="left:651px;top:275px;width:4px;height:4px;background:#3a3a3a"></div>
<div style="left:540px;top:329px;width:8px;height:8px;background:#f8f8f8;border:1px solid #b0b0b0"></div>
<svg width="750" height="531"><path d="M541.5 332 L543.5 335 L547 330" stroke="#111" stroke-width="1.4" fill="none"/></svg>
<div class="t b" style="left:553px;top:328px;color:#454545;letter-spacing:-0.45px">Close Loop Control</div>
<div class="t b" style="left:539px;top:342px;color:#454545;letter-spacing:-0.45px">Target:None</div>
<div style="left:657px;top:340px;width:44px;height:14px;background:#fafafa;border-left:1px solid #8a8a8a;border-top:1px solid #8a8a8a"></div>
<div style="left:701px;top:340px;width:42px;height:14px;background:#efefef;border-right:1px solid #8a8a8a;border-bottom:1px solid #8a8a8a;border-left:1px solid #fafafa;border-top:1px solid #fafafa"></div>
<div class="t " style="left:701px;top:342px;width:42px;text-align:center;font-size:8.5px;color:#bdbdbd;letter-spacing:-0.3px">Apply</div>
<div style="left:543px;top:446px;width:33px;height:33px;background:#d6d4ce"></div>
<svg width="750" height="531">
<path d="M559.5 450 L567.5 458 L551.5 458 Z M551.5 467 L567.5 467 L559.5 476 Z" fill="#5a5a5a"/><rect x="552" y="460" width="15" height="1.6" fill="#5a5a5a"/><rect x="552" y="463.5" width="15" height="1.6" fill="#5a5a5a"/>
</svg>
<div style="left:583px;top:445px;width:116px;height:59px;background:#f2f2f2;border:1px solid #d8d8d8"></div>
<div style="left:593px;top:452px;width:45px;height:45px;background:#bababa;border-left:1px solid #d0d0d0;border-top:1px solid #d0d0d0;border-right:1px solid #9a9a9a;border-bottom:1px solid #9a9a9a"></div>
<svg width="750" height="531"><path d="M608 459.5 L626.5 468.5 L608 477.5 Z" fill="#8a8a8a" stroke="#3a3a3a" stroke-width="1.2"/></svg>
<div class="t " style="left:593px;top:482px;width:45px;text-align:center;font-family:Liberation Serif;font-size:10.5px;color:#2a2a2a;letter-spacing:-0.2px">START</div>
<div style="left:645px;top:454px;width:44px;height:44px;background:#ffff00;border-radius:5px"></div>
<div style="left:659px;top:463px;width:17px;height:17px;background:#ee0000"></div>
<div class="t " style="left:645px;top:483px;width:44px;text-align:center;font-family:Liberation Serif;font-size:10.5px;color:#4a4a2a;letter-spacing:-0.2px">STOP</div>
<div style="left:545px;top:512px;width:8px;height:8px;background:#fff;border:1px solid #a0a0a0;border-right-color:#e8e8e8;border-bottom-color:#e8e8e8"></div>
<div class="t b" style="left:558px;top:512px;color:#555;letter-spacing:-0.35px">Auto return after testing (Speed: 50)</div>
</body></html>
